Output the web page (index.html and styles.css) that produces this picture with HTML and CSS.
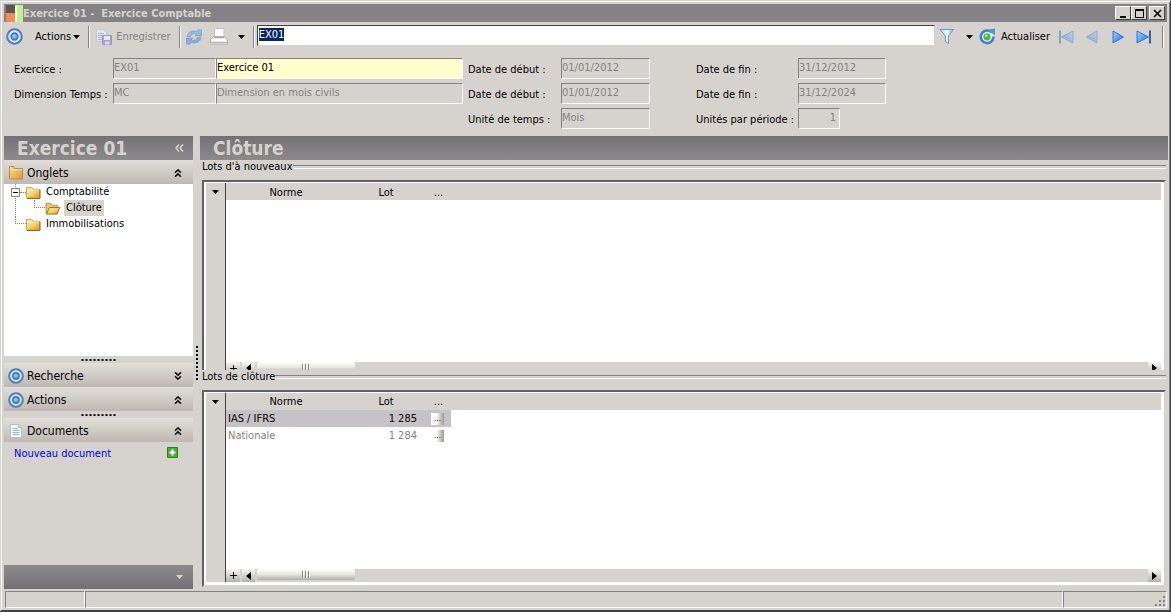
FILE: index.html
```html
<!DOCTYPE html>
<html lang="fr">

<head>
    <meta charset="UTF-8">
    <meta name="viewport" content="width=device-width, initial-scale=1.0">
    <title>Exercice 01 - Exercice Comptable</title>
    <link rel="stylesheet" href="styles.css">
</head>

<body>
    <!-- shared icons -->
    <svg class="defs" width="0" height="0">
        <defs>
            <linearGradient id="gold" x1="0" y1="0" x2="1" y2="1">
                <stop offset="0" stop-color="#fff3b4"/>
                <stop offset="0.5" stop-color="#fad468"/>
                <stop offset="1" stop-color="#dc9420"/>
            </linearGradient>
            <linearGradient id="amber" x1="0" y1="0" x2="1" y2="1">
                <stop offset="0" stop-color="#fbdc94"/>
                <stop offset="1" stop-color="#dd9a36"/>
            </linearGradient>
            <linearGradient id="blue" x1="0" y1="0" x2="1" y2="1">
                <stop offset="0" stop-color="#9fd0fb"/>
                <stop offset="1" stop-color="#1479f0"/>
            </linearGradient>
            <linearGradient id="glass" x1="0" y1="0" x2="1" y2="0">
                <stop offset="0" stop-color="#b4cdf4"/>
                <stop offset="0.5" stop-color="#f4f8ff"/>
                <stop offset="1" stop-color="#8fb0e8"/>
            </linearGradient>
            <symbol id="target" viewBox="0 0 16 16">
                <circle cx="8" cy="8" r="6.8" fill="#e6eefa" stroke="#4a7ccb" stroke-width="2"/>
                <circle cx="8" cy="8" r="3.2" fill="#6aa6ee" stroke="#3a70c6" stroke-width="1.4"/>
                <circle cx="7.6" cy="7.6" r="1.5" fill="#8cc4ff"/>
            </symbol>
            <symbol id="folder" viewBox="0 0 16 14">
                <path d="M0.5 1.5h5.500l1.500 2H14.500v9.500H0.500z" fill="url(#gold)" stroke="#c9a050"/>
                <path d="M1 4.500h13" stroke="#fff8d4"/>
                <path d="M15 4v9.500H1" fill="none" stroke="#7d5c1c"/>
            </symbol>
            <symbol id="folder-big" viewBox="0 0 14 14">
                <path d="M0.500 2.500v-2h4.500v2h8.500v10.500H0.500z" fill="url(#amber)" stroke="#c08a3c"/>
                <path d="M1 3.500h12" stroke="#fdeab8"/>
            </symbol>
            <symbol id="folder-open" viewBox="0 0 16 14">
                <path d="M0.500 12.500v-11h5l1.500 2h5.500v3" fill="#f0c666" stroke="#b98c38"/>
                <path d="M1 13L4.200 6H15.300L12.300 13z" fill="url(#gold)" stroke="#8e6a22"/>
            </symbol>
            <symbol id="page" viewBox="0 0 14 16">
                <path d="M1.500 1.500h8l3 3v10h-11z" fill="#f6f9ff" stroke="#a9bce4"/>
                <path d="M9.500 1.500v3h3" fill="#cfdcf5" stroke="#a9bce4"/>
                <path d="M3.500 5.500h5M3.500 7.500h7M3.500 9.500h7M3.500 11.500h7" stroke="#9db6e6"/>
            </symbol>
            <symbol id="plus" viewBox="0 0 7 7">
                <path d="M3.500 0v7M0 3.500h7" stroke="#000"/>
            </symbol>
            <symbol id="chev-up" viewBox="0 0 8 8">
                <path d="M1 3.700L4 0.900L7 3.700M1 7.700L4 4.900L7 7.700" fill="none" stroke="#000" stroke-width="1.500"/>
            </symbol>
            <symbol id="chev-down" viewBox="0 0 8 8">
                <path d="M1 0.300L4 3.100L7 0.300M1 4.300L4 7.100L7 4.300" fill="none" stroke="#000" stroke-width="1.500"/>
            </symbol>
            <symbol id="caret" viewBox="0 0 7 4">
                <path d="M0 0h7L3.500 4z" fill="currentColor"/>
            </symbol>
            <symbol id="play" viewBox="0 0 16 16">
                <path d="M3 2L13.500 8L3 14z" fill="url(#blue)" stroke="#2b78d8"/>
            </symbol>
            <symbol id="play-end" viewBox="0 0 16 16">
                <path d="M1 2L12.500 8L1 14z" fill="url(#blue)" stroke="#2b78d8"/>
                <path d="M14 1.500v13" stroke="#2c64b4" stroke-width="2"/>
            </symbol>
        </defs>
    </svg>

    <div class="window">
        <header class="titlebar">
            <svg class="logo" width="17" height="17" viewBox="0 0 17 17">
                <path d="M0 0h9v9H0z" fill="#5b564f"/>
                <path d="M0 8h9v9H0z" fill="#f58a55"/>
                <path d="M9 0h8v17H9z" fill="#bdf58c"/>
                <path d="M9 0h2v17H9z" fill="#f4fbe8"/>
            </svg>
            <h1>Exercice 01 -&nbsp; Exercice Comptable</h1>
            <div class="win-buttons">
                <button type="button" aria-label="Réduire"><svg width="9" height="9"><path d="M1 7h6v2H1z"/></svg></button>
                <button type="button" aria-label="Agrandir"><svg width="9" height="9"><path d="M0 0h9v9H0zM1 2v6h7V2z" fill-rule="evenodd"/></svg></button>
                <button type="button" class="close" aria-label="Fermer"><svg width="9" height="9"><path d="M1 1l7 7M8 1l-7 7" stroke="#000" stroke-width="1.6"/></svg></button>
            </div>
        </header>

        <div class="toolbar">
            <svg width="17" height="17"><use href="#target"/></svg>
            <button type="button" class="tool actions">Actions <svg width="7" height="4"><use href="#caret"/></svg></button>
            <span class="sep"></span>
            <button type="button" class="tool save" disabled>
                <svg width="16" height="16" viewBox="0 0 16 16" opacity="0.6">
                    <path d="M0.500 0.500h7l3 3v9h-10z" fill="#eef3fd" stroke="#b0c2e8"/>
                    <path d="M2 4.500h6M2 6.500h6M2 8.500h4M2 10.500h4" stroke="#86a0d8"/>
                    <path d="M6.500 6.500h9v9h-9z" fill="#8488cc" stroke="#7074bc"/>
                    <path d="M8 7h6v4H8z" fill="#f4f6ff"/>
                    <path d="M9 12.500h4.500v3H9z" fill="#dfe2f4"/>
                </svg>
                Enregistrer
            </button>
            <span class="sep"></span>
            <button type="button" class="tool refresh" aria-label="Rafraîchir">
                <svg width="16" height="16" viewBox="0 0 16 16" opacity="0.75">
                    <path d="M1 7.500C1.500 3 6 1 10.500 2.500L12.500 0.500L15.500 1V7H9L11 5C8 4.200 5 5 4.500 7.500z" fill="#7db4e8" stroke="#5088c4" stroke-width="0.600"/>
                    <path d="M15 8.500C14.500 13 10 15 5.500 13.500L3.500 15.500L0.500 15V9H7L5 11C8 11.800 11 11 11.500 8.500z" fill="#6ca4dc" stroke="#5088c4" stroke-width="0.600"/>
                </svg>
            </button>
            <button type="button" class="tool print" aria-label="Imprimer">
                <svg width="18" height="17" viewBox="0 0 18 17">
                    <path d="M4.500 0.500h9.500v9H4.500z" fill="#fcfcfc" stroke="#c4c4c4"/>
                    <path d="M3.500 8.500h11l3 3v4.500h-17v-4.500z" fill="#e6e6e8" stroke="#b4b4b6"/>
                    <path d="M4 9.500h10" stroke="#a8a8aa"/>
                    <path d="M2 12h14" stroke="#fff" stroke-width="2"/>
                    <path d="M1 14.500h16" stroke="#bcbcc0"/>
                </svg>
            </button>
            <button type="button" class="tool drop" aria-label="Options d'impression"><svg width="7" height="4"><use href="#caret"/></svg></button>
            <span class="sep"></span>
            <input class="search" type="text" value="EX01" aria-label="Code" autofocus>
            <button type="button" class="tool filter" aria-label="Filtrer">
                <svg width="16" height="17" viewBox="0 0 16 17">
                    <path d="M1 1.500h13.500L9.500 8v7.500l-3-1.500V8z" fill="url(#glass)" stroke="#6d92d8"/>
                </svg>
            </button>
            <button type="button" class="tool drop2" aria-label="Options de filtre"><svg width="7" height="4"><use href="#caret"/></svg></button>
            <button type="button" class="tool reload">
                <svg width="17" height="17" viewBox="0 0 17 17">
                    <circle cx="8" cy="9" r="6.400" fill="#eaf3fb"/>
                    <path d="M11 3.200A6.300 6.300 0 1 0 14.400 8.500" fill="none" stroke="#4a7ecb" stroke-width="2.600"/>
                    <path d="M10 1.500L16 0.500V7.500L13.500 5.500L10.500 5z" fill="#5a92dc"/>
                    <circle cx="8" cy="8.800" r="3.600" fill="#3fc03a"/>
                    <circle cx="7.200" cy="7.800" r="1.400" fill="#a4f08c"/>
                </svg>
                Actualiser
            </button>
            <nav class="pager" aria-label="Navigation">
                <button type="button" class="tool" aria-label="Premier" disabled><svg class="flip faded" width="16" height="16"><use href="#play-end"/></svg></button>
                <button type="button" class="tool" aria-label="Précédent" disabled><svg class="flip faded" width="16" height="16"><use href="#play"/></svg></button>
                <button type="button" class="tool" aria-label="Suivant"><svg width="16" height="16"><use href="#play"/></svg></button>
                <button type="button" class="tool" aria-label="Dernier"><svg width="16" height="16"><use href="#play-end"/></svg></button>
            </nav>
            <span class="sep"></span>
        </div>

        <form class="fields">
            <label for="code">Exercice :</label>
            <input id="code" type="text" value="EX01" disabled>
            <input class="required" type="text" value="Exercice 01" aria-label="Libellé de l'exercice">
            <label class="mid" for="debut1">Date de début :</label>
            <input id="debut1" type="text" value="01/01/2012" disabled>
            <label class="end" for="fin1">Date de fin :</label>
            <input id="fin1" type="text" value="31/12/2012" disabled>

            <label for="dim">Dimension Temps :</label>
            <input id="dim" type="text" value="MC" disabled>
            <input type="text" value="Dimension en mois civils" aria-label="Libellé de la dimension" disabled>
            <label class="mid" for="debut2">Date de début :</label>
            <input id="debut2" type="text" value="01/01/2012" disabled>
            <label class="end" for="fin2">Date de fin :</label>
            <input id="fin2" type="text" value="31/12/2024" disabled>

            <label class="mid unit" for="unite">Unité de temps :</label>
            <input id="unite" type="text" value="Mois" disabled>
            <label class="end" for="periode">Unités par période :</label>
            <input id="periode" class="short" type="text" value="1" disabled>
        </form>

        <div class="main">
            <aside class="sidebar">
                <div class="banner">
                    <h2>Exercice 01</h2>
                    <button type="button" class="collapse" aria-label="Replier">
                        <svg width="9" height="8"><path d="M4 0.500L1 4L4 7.500M8 0.500L5 4L8 7.500" fill="none" stroke="#e0ddd8" stroke-width="1.300"/></svg>
                    </button>
                </div>

                <button type="button" class="section">
                    <svg width="16" height="14"><use href="#folder-big"/></svg>
                    <span>Onglets</span>
                    <svg width="8" height="8"><use href="#chev-up"/></svg>
                </button>
                <ul class="tree">
                    <li class="open">
                        <div class="node">
                            <svg class="toggle" width="9" height="9"><path d="M0.500 0.500h8v8h-8z" fill="#fff" stroke="#848284"/><path d="M2 4.500h5" stroke="#000"/></svg>
                            <span class="dots"></span>
                            <svg width="15" height="13"><use href="#folder"/></svg>
                            <span class="name">Comptabilité</span>
                        </div>
                        <ul>
                            <li>
                                <div class="node">
                                    <span class="dots corner"></span>
                                    <svg width="16" height="13"><use href="#folder-open"/></svg>
                                    <span class="name current">Clôture</span>
                                </div>
                            </li>
                        </ul>
                    </li>
                    <li>
                        <div class="node">
                            <span class="dots corner"></span>
                            <svg width="15" height="13"><use href="#folder"/></svg>
                            <span class="name">Immobilisations</span>
                        </div>
                    </li>
                </ul>

                <div class="grip"></div>
                <button type="button" class="section">
                    <svg width="16" height="16"><use href="#target"/></svg>
                    <span>Recherche</span>
                    <svg width="8" height="8"><use href="#chev-down"/></svg>
                </button>
                <button type="button" class="section">
                    <svg width="16" height="16"><use href="#target"/></svg>
                    <span>Actions</span>
                    <svg width="8" height="8"><use href="#chev-up"/></svg>
                </button>
                <div class="grip"></div>
                <button type="button" class="section">
                    <svg width="16" height="16"><use href="#page"/></svg>
                    <span>Documents</span>
                    <svg width="8" height="8"><use href="#chev-up"/></svg>
                </button>
                <div class="docs">
                    <a href="#">Nouveau document</a>
                    <svg width="11" height="11" viewBox="0 0 11 11"><path d="M0.500 0.500h10v10h-10z" fill="#46ad35" stroke="#2f7d22"/><path d="M5.500 2.500v6M2.500 5.500h6" stroke="#fff" stroke-width="2"/></svg>
                </div>
                <div class="bottom"><svg width="9" height="4" viewBox="0 0 7 4"><use href="#caret"/></svg></div>
            </aside>

            <div class="splitter"></div>

            <main class="content">
                <div class="banner"><h2>Clôture</h2></div>

                <section class="group first">
                    <h3>Lots d'à nouveaux</h3>
                    <div class="panel">
                        <div class="gutter"><svg width="7" height="4"><use href="#caret"/></svg></div>
                        <div class="grid">
                            <table>
                                <thead>
                                    <tr><th class="norme">Norme</th><th class="lot">Lot</th><th class="more">...</th><th></th></tr>
                                </thead>
                            </table>
                            <div class="scroll">
                                <button type="button" class="add" aria-label="Ajouter"><svg width="7" height="7"><use href="#plus"/></svg></button>
                                <button type="button" class="arrow" aria-label="Gauche"><svg width="5" height="8"><path d="M5 0v8L0 4z"/></svg></button>
                                <div class="track"><span class="thumb"></span></div>
                                <button type="button" class="arrow" aria-label="Droite"><svg width="5" height="8"><path d="M0 0v8L5 4z"/></svg></button>
                            </div>
                        </div>
                    </div>
                </section>

                <section class="group second">
                    <h3>Lots de clôture</h3>
                    <div class="panel">
                        <div class="gutter"><svg width="7" height="4"><use href="#caret"/></svg></div>
                        <div class="grid">
                            <table>
                                <thead>
                                    <tr><th class="norme">Norme</th><th class="lot">Lot</th><th class="more">...</th><th></th></tr>
                                </thead>
                                <tbody>
                                    <tr class="selected"><td>IAS / IFRS</td><td class="num">1 285</td><td><button type="button">...</button></td></tr>
                                    <tr class="muted"><td>Nationale</td><td class="num">1 284</td><td><button type="button">...</button></td></tr>
                                </tbody>
                            </table>
                            <div class="scroll">
                                <button type="button" class="add" aria-label="Ajouter"><svg width="7" height="7"><use href="#plus"/></svg></button>
                                <button type="button" class="arrow" aria-label="Gauche"><svg width="5" height="8"><path d="M5 0v8L0 4z"/></svg></button>
                                <div class="track"><span class="thumb"></span></div>
                                <button type="button" class="arrow" aria-label="Droite"><svg width="5" height="8"><path d="M0 0v8L5 4z"/></svg></button>
                            </div>
                        </div>
                    </div>
                </section>
            </main>
        </div>

        <footer class="status">
            <span class="cell small"></span>
            <span class="cell wide"></span>
            <span class="cell last">
                <svg width="11" height="11" fill="#848284"><path d="M8 0h2v2H8zM4 4h2v2H4zM8 4h2v2H8zM0 8h2v2H0zM4 8h2v2H4zM8 8h2v2H8z"/></svg>
            </span>
        </footer>
    </div>

    <script>
        var search = document.querySelector('.search');
        search.focus();
        search.select();
    </script>
</body>

</html>
```
FILE: styles.css
```css
* {
    box-sizing: border-box;
}

body {
    margin: 0;
    background-color: #d6d3ce;
    font-family: Tahoma, "DejaVu Sans Condensed", "Noto Sans", sans-serif;
    font-size: 11px;
    line-height: 14px;
    color: #000;
}

h1, h2, h3, ul {
    margin: 0;
    padding: 0;
}

ul {
    list-style: none;
}

button, input {
    margin: 0;
    font: inherit;
    color: inherit;
}

svg {
    flex: none;
    display: block;
}

.defs {
    position: absolute;
}

.window {
    display: flex;
    flex-direction: column;
    height: 100vh;
    padding: 2px 2px 1px 2px;
    border: 1px solid #d6d3ce;
    border-right: 1px solid #424142;
    border-bottom: 2px solid #424142;
    box-shadow: inset 1px 1px 0 #fff, inset -1px 0 0 #848284;
}

/* title bar */
.titlebar {
    display: flex;
    align-items: center;
    flex: none;
    height: 18px;
    margin: 1px 1px 0;
    padding: 0 2px 0 2px;
    background-color: #848284;
    color: #d6d3ce;
}

.titlebar h1 {
    flex: 1;
    padding-top: 1px;
    font-size: 11px;
    font-weight: bold;
}

.win-buttons {
    display: flex;
}

.win-buttons button {
    display: flex;
    justify-content: center;
    align-items: center;
    width: 16px;
    height: 14px;
    padding: 0;
    background-color: #d6d3ce;
    border: 1px solid;
    border-color: #fff #424142 #424142 #fff;
}

.win-buttons .close {
    margin-left: 2px;
}

/* toolbar */
.toolbar {
    display: flex;
    align-items: center;
    flex: none;
    height: 29px;
    padding: 0 4px 0 3px;
}

.tool {
    display: flex;
    align-items: center;
    gap: 4px;
    padding: 0;
    border: none;
    background: none;
}

.tool:disabled {
    color: #848284;
}

.sep {
    width: 2px;
    height: 22px;
    border-left: 1px solid #848284;
    border-right: 1px solid #fff;
}

.actions {
    gap: 2px;
    margin: 0 8px 0 12px;
}

.save {
    margin: 0 8px 0 6px;
}

.refresh {
    margin: 0 8px 0 5px;
}

.print {
    margin-right: 10px;
}

.drop {
    margin-right: 8px;
}

.search {
    flex: 1;
    min-width: 0;
    height: 21px;
    margin: 0 0 2px 2px;
    padding: 0 1px 3px;
    background-color: #fff;
    border: 1px solid;
    border-color: #424142 #d6d3ce #d6d3ce #424142;
    outline: none;
}

.search::selection {
    background-color: #08246b;
    color: #fff;
}

.filter {
    margin: 0 11px 0 4px;
}

.drop2 {
    margin-right: 6px;
}

.reload {
    gap: 5px;
}

.pager {
    display: flex;
    gap: 10px;
    margin: 0 10px 0 8px;
}

.flip {
    transform: scaleX(-1);
}

.faded {
    opacity: 0.45;
}

/* form */
.fields {
    display: grid;
    grid-template-columns: 99px 103px 247px 98px 89px 148px 88px;
    grid-auto-rows: 21px;
    row-gap: 4px;
    flex: none;
    height: 85px;
    padding: 7px 0 0 11px;
}

.fields label {
    padding-top: 5px;
    white-space: nowrap;
}

.fields .mid {
    padding-left: 5px;
}

.fields .end {
    padding-left: 46px;
}

.fields .unit {
    grid-column: 4;
}

.fields input {
    width: 100%;
    min-width: 0;
    height: 21px;
    padding: 0 0 3px;
    background-color: #d6d3ce;
    border: 1px solid;
    border-color: #848284 #fff #fff #848284;
    color: #848284;
}

.fields .required {
    background-color: #ffffce;
    color: #000;
}

.fields .short {
    width: 42px;
    padding-right: 3px;
    text-align: right;
}

/* main area */
.main {
    display: flex;
    flex: 1;
    min-height: 0;
    padding-left: 1px;
}

.banner {
    display: flex;
    align-items: center;
    justify-content: space-between;
    flex: none;
    height: 24px;
    padding: 0 9px 0 13px;
    background: linear-gradient(#737173, #8c8a8c);
    color: #d6d3ce;
}

.banner h2 {
    font-size: 19px;
    line-height: 24px;
    font-weight: bold;
}

.collapse {
    padding: 0;
    border: none;
    background: none;
}

.sidebar {
    display: flex;
    flex-direction: column;
    flex: none;
    width: 189px;
}

.section {
    display: flex;
    align-items: center;
    gap: 3px;
    flex: none;
    height: 24px;
    padding: 1px 11px 0 4px;
    border: none;
    background: linear-gradient(#e2dfda, #bdb8b1);
    font-size: 12px;
    text-align: left;
}

.section span {
    flex: 1;
}

.tree {
    flex: 1;
    padding: 0 0 0 7px;
    background-color: #fff;
}

.tree ul {
    padding-left: 19px;
}

.node {
    display: flex;
    align-items: center;
    height: 16px;
}

.name {
    margin-left: 3px;
    padding: 1px 2px;
}

.current {
    background-color: #d6d3ce;
}

.dots {
    width: 6px;
    border-top: 1px dotted #848284;
}

.corner {
    width: 11px;
    height: 8px;
    margin-left: 4px;
    border-left: 1px dotted #848284;
    border-top: none;
    border-bottom: 1px dotted #848284;
    align-self: flex-start;
}

/* line from the toggle down to the next root node */
.tree .open {
    background: linear-gradient(#848284 50%, transparent 50%) 4px 12px / 1px 2px repeat-y;
}

.grip {
    flex: none;
    height: 7px;
    padding: 0 76px;
    background: radial-gradient(circle, #000 1px, transparent 1px) center / 4px 4px repeat-x;
    background-clip: content-box;
}

.docs {
    display: flex;
    justify-content: space-between;
    flex: none;
    height: 123px;
    padding: 5px 15px 0 10px;
}

.docs a {
    color: #0000e7;
    text-decoration: none;
}

.bottom {
    display: flex;
    align-items: center;
    justify-content: flex-end;
    flex: none;
    height: 24px;
    padding-right: 9px;
    background: linear-gradient(#8c8a8c, #737173);
    color: #d6d3ce;
}

.splitter {
    display: flex;
    align-items: center;
    justify-content: center;
    flex: none;
    width: 7px;
}

.splitter::before {
    content: "";
    width: 2px;
    height: 34px;
    background: linear-gradient(#000 50%, transparent 50%) 0 0 / 2px 4px;
}

.content {
    display: flex;
    flex-direction: column;
    flex: 1;
    min-width: 0;
}

.group {
    display: flex;
    flex-direction: column;
    min-height: 0;
    padding: 0 2px 2px;
}

.first {
    flex: 209 1 0;
    overflow: hidden;
}

.second {
    flex: 219 1 0;
}

.group h3 {
    display: flex;
    align-items: center;
    flex: none;
    font-size: 11px;
    font-weight: normal;
    white-space: nowrap;
}

.group h3::after {
    content: "";
    flex: 1;
    height: 2px;
    border-top: 1px solid #848284;
    border-bottom: 1px solid #fff;
}

.panel {
    display: flex;
    flex: 1;
    min-height: 0;
    margin-top: 6px;
    padding: 1px 3px 3px 2px;
    background-color: #fff;
    border: 2px solid;
    border-color: #636163 #d6d3ce #d6d3ce #636163;
}

/* the first list runs under the next group */
.first .panel {
    margin-bottom: -12px;
}

.gutter {
    display: flex;
    justify-content: center;
    width: 20px;
    padding-top: 7px;
    background-color: #d6d3ce;
    border-right: 1px solid #424142;
}

.grid {
    display: flex;
    flex-direction: column;
    justify-content: space-between;
    flex: 1;
    min-width: 0;
}

table {
    width: 100%;
    table-layout: fixed;
    border-collapse: collapse;
}

th, td {
    height: 17px;
    padding: 1px 0 0;
    line-height: 15px;
    font-weight: normal;
    text-align: left;
}

th {
    background-color: #d6d3ce;
    text-align: center;
}

td {
    padding-left: 2px;
}

.norme {
    width: 120px;
}

.lot {
    width: 80px;
}

.more {
    width: 25px;
}

.num {
    padding-right: 9px;
    text-align: right;
}

.selected td {
    background-color: #c6c3c6;
}

.muted {
    color: #848284;
}

td button {
    display: block;
    width: 13px;
    height: 12px;
    margin-left: 3px;
    padding: 0;
    border: none;
    background: linear-gradient(to right, #fff 40%, #9c9a94);
    color: #000;
    font-size: 8px;
    line-height: 10px;
}

.scroll {
    display: flex;
    flex: none;
    height: 13px;
    background-color: #d6d3ce;
}

.scroll button {
    display: flex;
    justify-content: center;
    align-items: center;
    padding: 0;
    border: none;
    background: linear-gradient(#f7f7f5, #b5b2ad);
}

.scroll .add {
    width: 14px;
    margin-right: 2px;
    padding-left: 1px;
}

.arrow {
    width: 13px;
}

.track {
    display: flex;
    flex: 1;
    padding: 0 2px;
}

.thumb {
    display: flex;
    justify-content: center;
    align-items: center;
    width: 98px;
    height: 11px;
    border-radius: 2px;
    background: linear-gradient(#fff, #e7e5e1 50%, #b0ada6);
}

.thumb::before {
    content: "";
    width: 9px;
    height: 7px;
    background: linear-gradient(to right, #848284 1px, #fff 1px, #fff 2px, transparent 2px) 0 0 / 3px 7px;
}

/* status bar */
.status {
    display: flex;
    flex: none;
    height: 20px;
    margin-left: 1px;
    padding: 2px 1px 1px 1px;
}

.cell {
    border: 1px solid;
    border-color: #848284 #fff #fff #848284;
}

.small {
    width: 80px;
}

.wide {
    flex: 1;
}

.last {
    display: flex;
    align-items: flex-end;
    justify-content: flex-end;
    width: 104px;
}
```
